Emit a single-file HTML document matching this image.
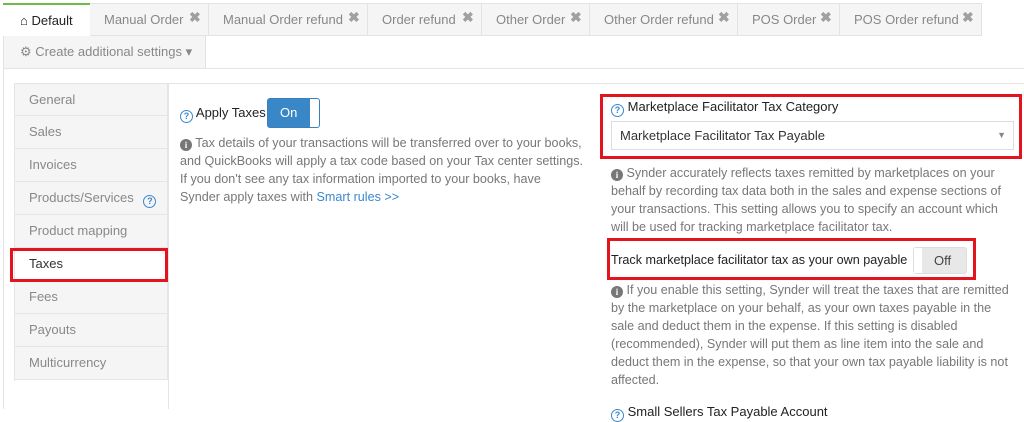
<!DOCTYPE html>
<html><head><meta charset="utf-8"><style>
*{box-sizing:border-box;margin:0;padding:0}
body{width:1024px;height:409px;overflow:hidden;background:#fff;font-family:"Liberation Sans",sans-serif;font-size:13px;color:#222;position:relative}
.a{position:absolute}
.tab{position:absolute;top:3px;height:33px;background:#f5f5f5;border:1px solid #e3e3e3;border-left:none;color:#888;line-height:32px;padding-left:14px;font-size:13px}
.x{position:absolute;top:-3px;font-size:14px;font-weight:bold;color:#a0a0a0}
.side{position:absolute;left:14px;width:154px;height:33px;background:#f5f5f5;border:1px solid #e5e5e5;border-top:none;color:#888;line-height:32px;padding-left:14px}
.info{color:#777;font-size:12.6px;line-height:18px;position:absolute;white-space:nowrap}
.ic{display:inline-block;width:12px;height:12px;border-radius:50%;background:#777;color:#fff;font-size:9px;line-height:12px;text-align:center;font-weight:bold;font-family:"Liberation Serif",serif;vertical-align:-1px}
.q{display:inline-block;width:13px;height:13px;border-radius:50%;border:1.5px solid #3a87d0;color:#3a87d0;font-size:9px;line-height:10px;text-align:center;font-weight:bold;vertical-align:-2px}
.red{position:absolute;border:3px solid #e3141e}
</style></head><body>
<div class="a" style="left:3px;top:3px;width:87px;height:33px;border-top:2px solid #6fba4c;background:#fff;line-height:31px;padding-left:17px;color:#222">&#8962; Default</div>
<div class="tab" style="left:90px;width:119px">Manual Order<span class="x" style="left:99px">✖</span></div>
<div class="tab" style="left:209px;width:159px">Manual Order refund<span class="x" style="left:139px">✖</span></div>
<div class="tab" style="left:368px;width:114px">Order refund<span class="x" style="left:94px">✖</span></div>
<div class="tab" style="left:482px;width:108px">Other Order<span class="x" style="left:88px">✖</span></div>
<div class="tab" style="left:590px;width:148px">Other Order refund<span class="x" style="left:128px">✖</span></div>
<div class="tab" style="left:738px;width:102px">POS Order<span class="x" style="left:82px">✖</span></div>
<div class="tab" style="left:840px;width:142px">POS Order refund<span class="x" style="left:122px">✖</span></div>
<div class="a" style="left:3px;top:36px;width:203px;height:33px;background:#f5f5f5;border:1px solid #e3e3e3;border-top:none;color:#888;line-height:31px;padding-left:16px">⚙ Create additional settings ▾</div>
<div class="a" style="left:3px;top:68px;width:1021px;height:1px;background:#e5e5e5"></div>
<div class="a" style="left:3px;top:68px;width:1px;height:341px;background:#e5e5e5"></div>
<div class="a" style="left:14px;top:83px;width:1010px;height:1px;background:#e5e5e5"></div>
<div class="a" style="left:14px;top:83px;width:1px;height:298px;background:#e5e5e5"></div>
<div class="a" style="left:168px;top:83px;width:1px;height:326px;background:#e5e5e5"></div>
<div class="side" style="top:84px;height:32px">General</div>
<div class="side" style="top:116px">Sales</div>
<div class="side" style="top:149px">Invoices</div>
<div class="side" style="top:182px">Products/Services <span class="q" style="margin-left:6px">?</span></div>
<div class="side" style="top:215px">Product mapping</div>
<div class="side" style="top:248px;background:#fff;color:#333">Taxes</div>
<div class="side" style="top:281px">Fees</div>
<div class="side" style="top:314px">Payouts</div>
<div class="side" style="top:347px">Multicurrency</div>
<div class="red" style="left:10px;top:248px;width:158px;height:34px"></div>

<div class="a" style="left:180px;top:105px;font-size:13px"><span class="q">?</span> Apply Taxes</div>
<div class="a" style="left:267px;top:98px;width:53px;height:30px;border:1px solid #3a7fc0;border-radius:3px;background:#3a87c8;color:#fff;line-height:28px;padding-left:12px">On<div class="a" style="right:0;top:0;width:9px;height:28px;background:#fff;border-radius:0 2px 2px 0"></div></div>
<div class="info" style="left:180px;top:134px"><span class="ic">i</span> Tax details of your transactions will be transferred over to your books,<br>and QuickBooks will apply a tax code based on your Tax center settings.<br>If you don't see any tax information imported to your books, have<br>Synder apply taxes with <span style="color:#3a87d0">Smart rules &gt;&gt;</span></div>

<div class="red" style="left:600px;top:94px;width:422px;height:65px"></div>
<div class="a" style="left:611px;top:99px"><span class="q">?</span> Marketplace Facilitator Tax Category</div>
<div class="a" style="left:611px;top:121px;width:403px;height:29px;border:1px solid #ddd;color:#333;line-height:27px;padding-left:8px">Marketplace Facilitator Tax Payable<span class="a" style="right:7px;top:0;color:#888;font-size:9px">▼</span></div>
<div class="info" style="left:611px;top:164px"><span class="ic">i</span> Synder accurately reflects taxes remitted by marketplaces on your<br>behalf by recording tax data both in the sales and expense sections of<br>your transactions. This setting allows you to specify an account which<br>will be used for tracking marketplace facilitator tax.</div>
<div class="red" style="left:607px;top:238px;width:369px;height:42px"></div>
<div class="a" style="left:611px;top:253px;font-size:12.6px">Track marketplace facilitator tax as your own payable</div>
<div class="a" style="left:913px;top:247px;width:54px;height:27px;border:1px solid #ddd;border-radius:3px;background:#e8e8e8;color:#444;line-height:25px;padding-left:20px">Off<div class="a" style="left:0;top:0;width:8px;height:25px;background:#fff"></div></div>
<div class="info" style="left:611px;top:281px"><span class="ic">i</span> If you enable this setting, Synder will treat the taxes that are remitted<br>by the marketplace on your behalf, as your own taxes payable in the<br>sale and deduct them in the expense. If this setting is disabled<br>(recommended), Synder will put them as line item into the sale and<br>deduct them in the expense, so that your own tax payable liability is not<br>affected.</div>
<div class="a" style="left:611px;top:404px"><span class="q">?</span> Small Sellers Tax Payable Account</div>
</body></html>
